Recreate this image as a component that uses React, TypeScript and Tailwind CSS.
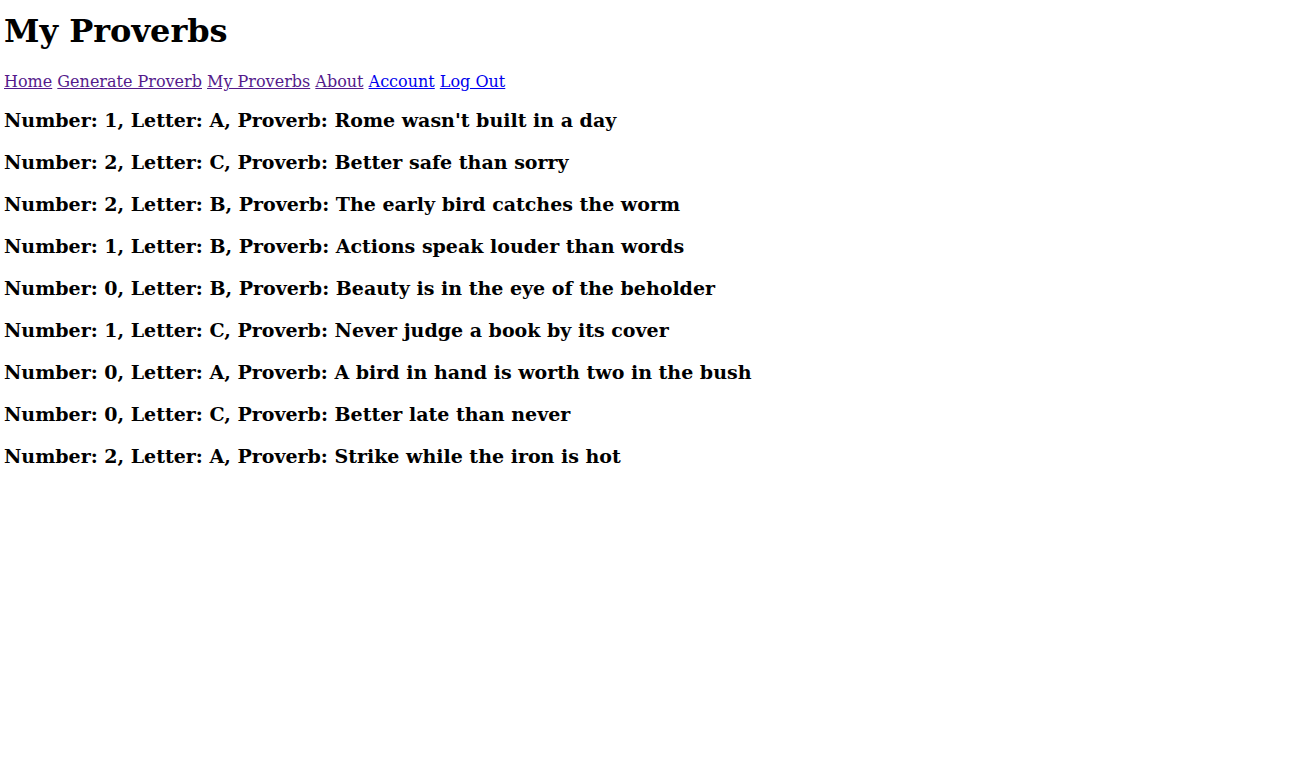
import { Fragment } from "react";

const links = [
  { label: "Home", href: "#home", visited: true },
  { label: "Generate Proverb", href: "#generate", visited: true },
  { label: "My Proverbs", href: "#proverbs", visited: true },
  { label: "About", href: "#about", visited: true },
  { label: "Account", href: "#account", visited: false },
  { label: "Log Out", href: "#logout", visited: false },
];

const proverbs = [
  { number: 1, letter: "A", text: "Rome wasn't built in a day" },
  { number: 2, letter: "C", text: "Better safe than sorry" },
  { number: 2, letter: "B", text: "The early bird catches the worm" },
  { number: 1, letter: "B", text: "Actions speak louder than words" },
  { number: 0, letter: "B", text: "Beauty is in the eye of the beholder" },
  { number: 1, letter: "C", text: "Never judge a book by its cover" },
  { number: 0, letter: "A", text: "A bird in hand is worth two in the bush" },
  { number: 0, letter: "C", text: "Better late than never" },
  { number: 2, letter: "A", text: "Strike while the iron is hot" },
];

export default function App() {
  return (
    <main className="min-h-screen bg-white px-1 pt-3 font-['DejaVu_Serif',serif] text-base text-black">
      <h1 className="text-[32px] leading-[38px] font-bold">My Proverbs</h1>
      <nav className="mt-[22px] leading-[20px]">
        {links.map((link) => (
          <Fragment key={link.label}>
            <a
              href={link.href}
              className={link.visited ? "text-[#551a8b] underline" : "text-[#0000ee] underline"}
            >
              {link.label}
            </a>{" "}
          </Fragment>
        ))}
      </nav>
      <section className="mt-[17px] flex flex-col gap-5">
        {proverbs.map((p) => (
          <h3 key={p.text} className="text-[19px] leading-[22px] font-bold">
            {`Number: ${p.number}, Letter: ${p.letter}, Proverb: ${p.text}`}
          </h3>
        ))}
      </section>
    </main>
  );
}
